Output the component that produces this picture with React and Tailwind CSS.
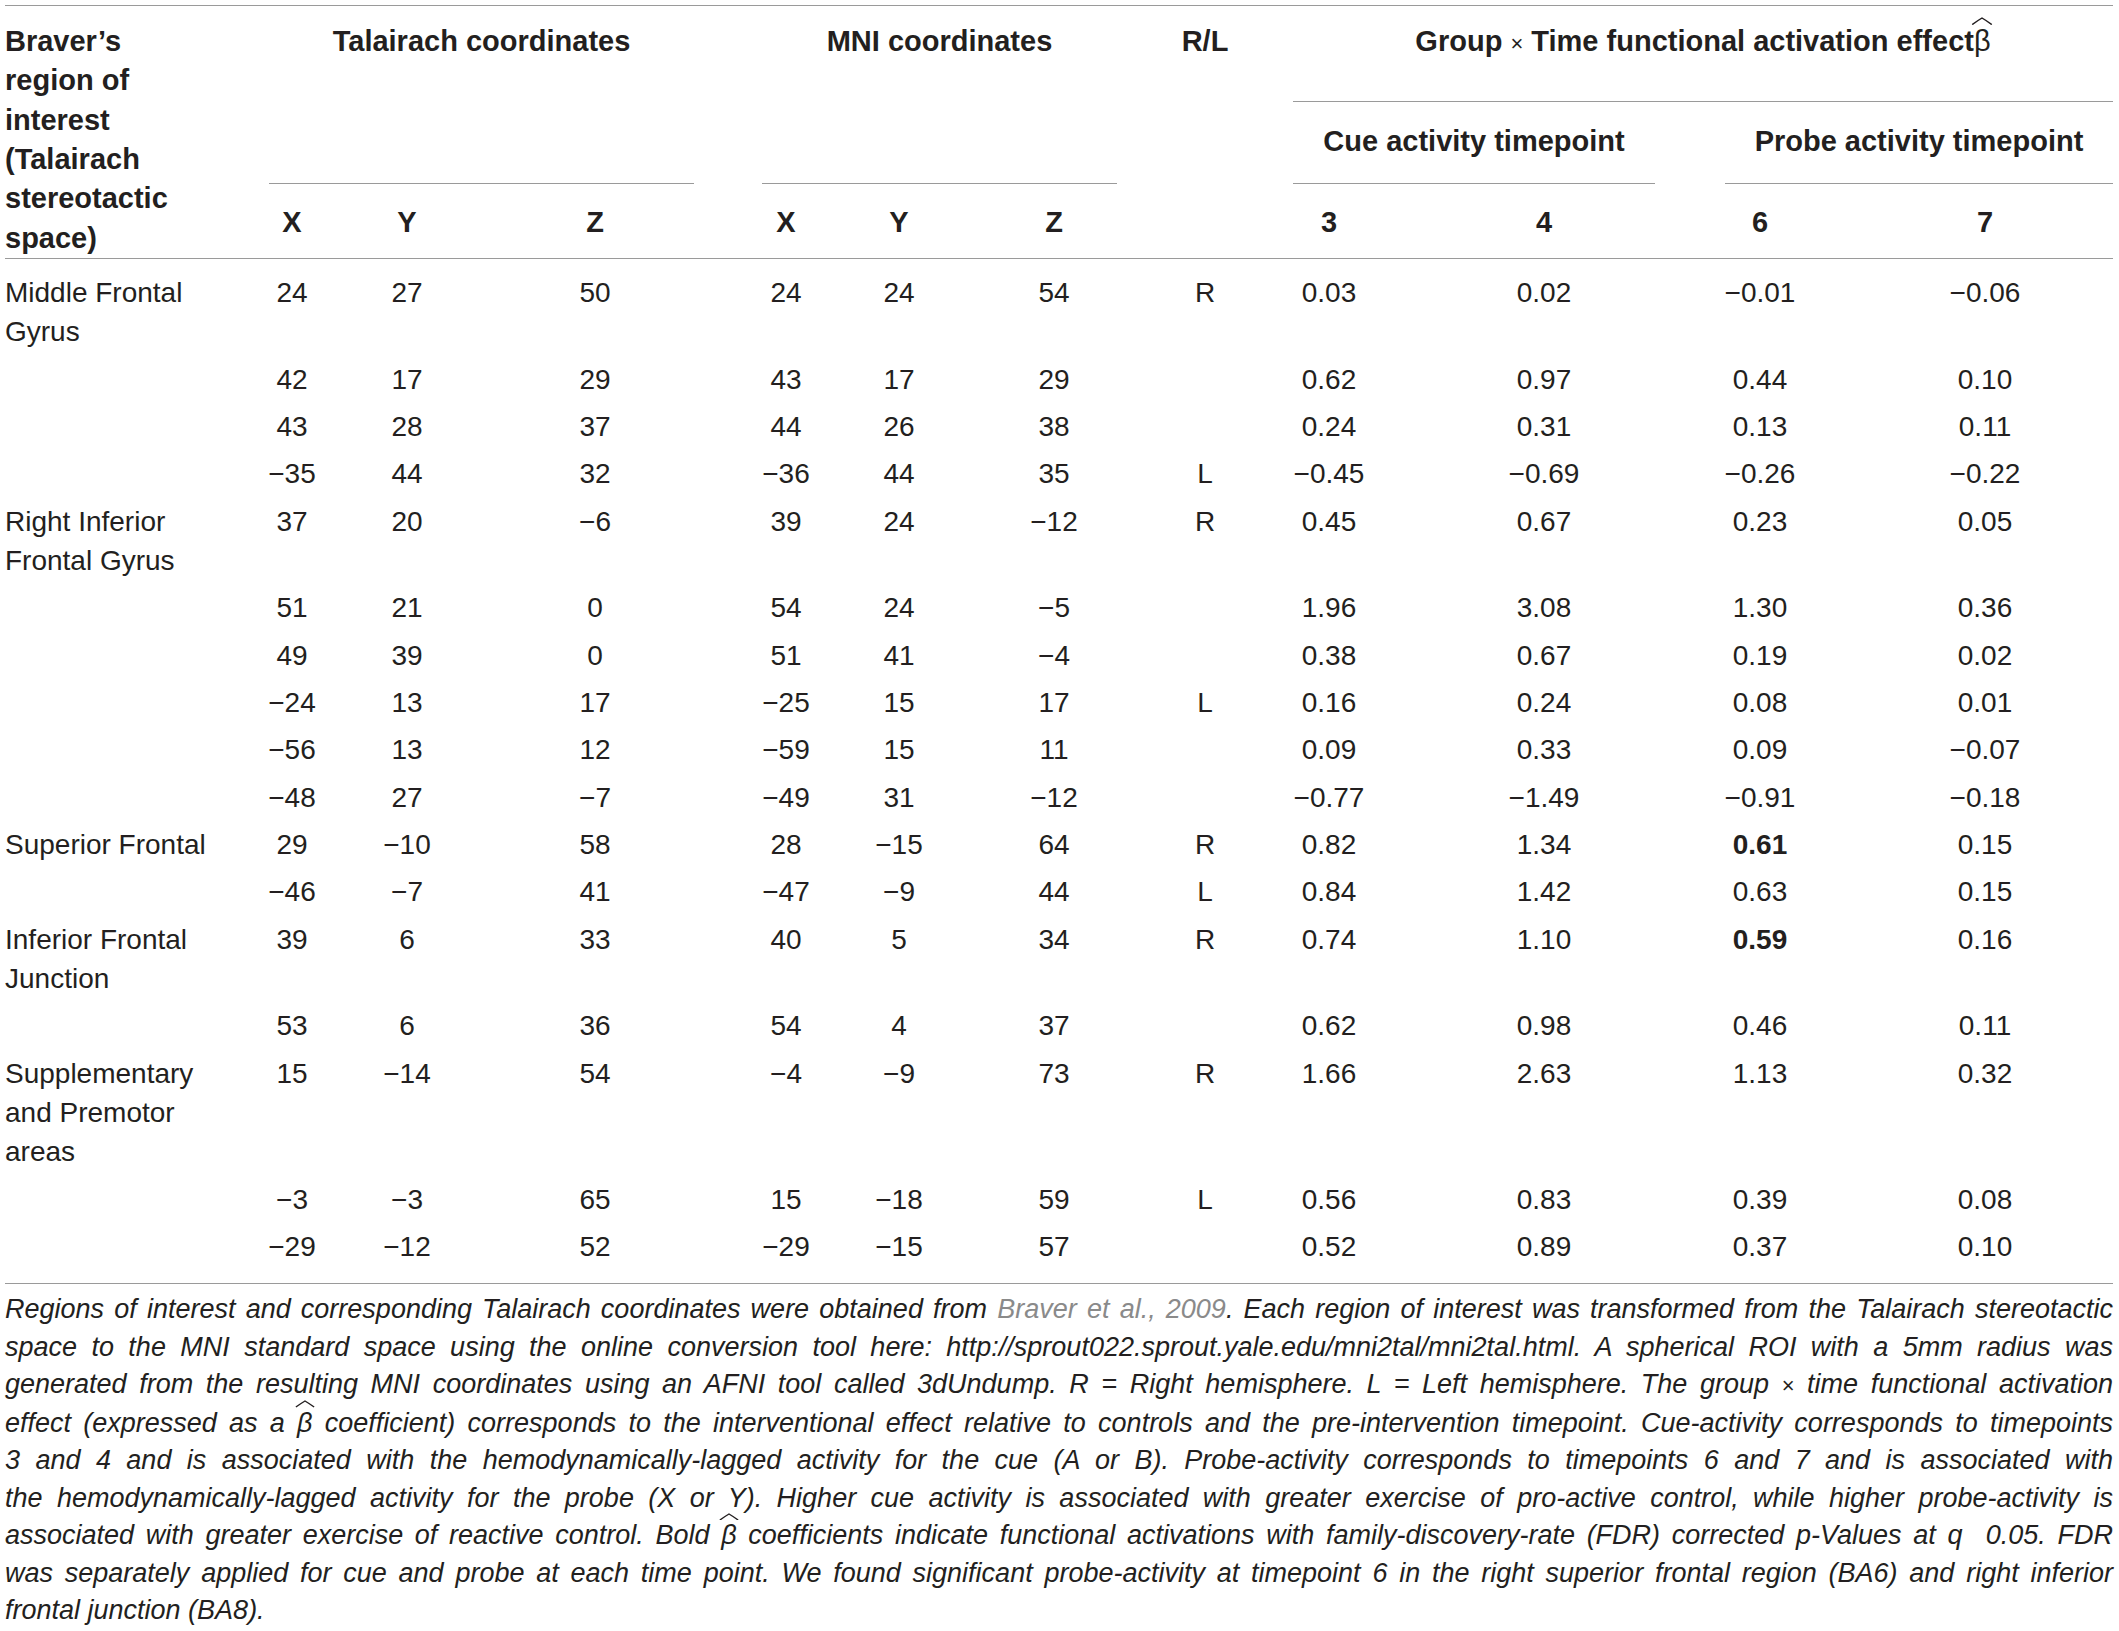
import React from 'react';

const rows = [
  { name: ['Middle Frontal', 'Gyrus'], v: ['24', '27', '50', '24', '24', '54', 'R', '0.03', '0.02', '−0.01', '−0.06'] },
  { v: ['42', '17', '29', '43', '17', '29', '', '0.62', '0.97', '0.44', '0.10'] },
  { v: ['43', '28', '37', '44', '26', '38', '', '0.24', '0.31', '0.13', '0.11'] },
  { v: ['−35', '44', '32', '−36', '44', '35', 'L', '−0.45', '−0.69', '−0.26', '−0.22'] },
  { name: ['Right Inferior', 'Frontal Gyrus'], v: ['37', '20', '−6', '39', '24', '−12', 'R', '0.45', '0.67', '0.23', '0.05'] },
  { v: ['51', '21', '0', '54', '24', '−5', '', '1.96', '3.08', '1.30', '0.36'] },
  { v: ['49', '39', '0', '51', '41', '−4', '', '0.38', '0.67', '0.19', '0.02'] },
  { v: ['−24', '13', '17', '−25', '15', '17', 'L', '0.16', '0.24', '0.08', '0.01'] },
  { v: ['−56', '13', '12', '−59', '15', '11', '', '0.09', '0.33', '0.09', '−0.07'] },
  { v: ['−48', '27', '−7', '−49', '31', '−12', '', '−0.77', '−1.49', '−0.91', '−0.18'] },
  { name: ['Superior Frontal'], v: ['29', '−10', '58', '28', '−15', '64', 'R', '0.82', '1.34', '0.61', '0.15'], bold: 9 },
  { v: ['−46', '−7', '41', '−47', '−9', '44', 'L', '0.84', '1.42', '0.63', '0.15'] },
  { name: ['Inferior Frontal', 'Junction'], v: ['39', '6', '33', '40', '5', '34', 'R', '0.74', '1.10', '0.59', '0.16'], bold: 9 },
  { v: ['53', '6', '36', '54', '4', '37', '', '0.62', '0.98', '0.46', '0.11'] },
  { name: ['Supplementary', 'and Premotor', 'areas'], v: ['15', '−14', '54', '−4', '−9', '73', 'R', '1.66', '2.63', '1.13', '0.32'] },
  { v: ['−3', '−3', '65', '15', '−18', '59', 'L', '0.56', '0.83', '0.39', '0.08'] },
  { v: ['−29', '−12', '52', '−29', '−15', '57', '', '0.52', '0.89', '0.37', '0.10'] },
];

const cols = 'grid grid-cols-[235px_104px_126px_250px_132px_94px_216px_86px_162px_268px_164px_271px]';

// beta with a hat drawn over it
const BetaHat = ({ bold }) => (
  <span className={`relative inline-block ${bold ? 'font-normal' : ''}`}>
    β
    <svg
      className="absolute left-1/2 -translate-x-1/2 top-[-0.16em] w-[0.75em] h-[0.28em]"
      viewBox="0 0 20 8"
      preserveAspectRatio="none"
    >
      <path d="M1 7.5 Q6 3.5 10 1 Q14 3.5 19 7.5" fill="none" stroke="currentColor" strokeWidth="1.4" />
    </svg>
  </span>
);

const footerLines = [
  <>
    Regions of interest and corresponding Talairach coordinates were obtained from{' '}
    <span className="text-[#8a8a8a]">Braver et al., 2009</span>. Each region of interest was transformed from the Talairach stereotactic
  </>,
  <>space to the MNI standard space using the online conversion tool here: http://sprout022.sprout.yale.edu/mni2tal/mni2tal.html. A spherical ROI with a 5mm radius was</>,
  <>
    generated from the resulting MNI coordinates using an AFNI tool called 3dUndump. R = Right hemisphere. L = Left hemisphere. The group{' '}
    <span className="not-italic text-[22px]">×</span> time functional activation
  </>,
  <>
    effect (expressed as a <BetaHat /> coefficient) corresponds to the interventional effect relative to controls and the pre-intervention timepoint. Cue-activity corresponds to timepoints
  </>,
  <>3 and 4 and is associated with the hemodynamically-lagged activity for the cue (A or B). Probe-activity corresponds to timepoints 6 and 7 and is associated with</>,
  <>the hemodynamically-lagged activity for the probe (X or Y). Higher cue activity is associated with greater exercise of pro-active control, while higher probe-activity is</>,
  <>
    associated with greater exercise of reactive control. Bold <BetaHat /> coefficients indicate functional activations with family-discovery-rate (FDR) corrected p-Values at q{'\u00a0 '}0.05. FDR
  </>,
  <>was separately applied for cue and probe at each time point. We found significant probe-activity at timepoint 6 in the right superior frontal region (BA6) and right inferior</>,
];

const App = () => {
  return (
    <div className="min-h-screen bg-white pl-[5px] pt-[5px] font-['Liberation_Sans',Arial,sans-serif] text-[28px] text-[#231f20]">
      <div className="w-[2108px]">
        {/* header */}
        <div className={`${cols} grid-rows-[96px_82px_74px] border-t border-b border-[#9a9a9a] font-bold text-[29px] leading-[39.33px]`}>
          <div className="col-start-1 row-start-1 row-span-3 pt-[16px]">
            Braver’s<br />region of<br />interest<br />(Talairach<br />stereotactic<br />space)
          </div>
          <div className="col-start-2 col-span-3 row-start-1 row-span-2 ml-[29px] mr-[26px] pt-[16px] border-b border-[#9a9a9a] text-center">
            Talairach coordinates
          </div>
          <div className="col-start-5 col-span-3 row-start-1 row-span-2 ml-[42px] mr-[45px] pt-[16px] border-b border-[#9a9a9a] text-center">
            MNI coordinates
          </div>
          <div className="col-start-8 row-start-1 row-span-3 pt-[16px] text-center">R/L</div>
          <div className="col-start-9 col-span-4 row-start-1 ml-[45px] pt-[16px] border-b border-[#9a9a9a] text-center">
            Group <span className="font-normal text-[22px]">×</span> Time functional activation effect<BetaHat bold />
          </div>
          <div className="col-start-9 col-span-2 row-start-2 ml-[45px] mr-[23px] pt-[20px] border-b border-[#9a9a9a] text-center">
            Cue activity timepoint
          </div>
          <div className="col-start-11 col-span-2 row-start-2 ml-[47px] pt-[20px] border-b border-[#9a9a9a] text-center">
            Probe activity timepoint
          </div>
          {['X', 'Y', 'Z', 'X', 'Y', 'Z'].map((h, i) => (
            <div key={'h' + i} className="row-start-3 pt-[19px] text-center" style={{ gridColumnStart: i + 2 }}>
              {h}
            </div>
          ))}
          <div className="col-start-9 row-start-3 pt-[19px] text-center">3</div>
          <div className="col-start-10 row-start-3 pt-[19px] text-center">4</div>
          <div className="col-start-11 row-start-3 pt-[19px] text-center">6</div>
          <div className="col-start-12 row-start-3 pt-[19px] pl-[15px] text-center">7</div>
        </div>

        {/* body */}
        <div className={`${cols} pt-[10px] pb-[13px] border-b border-[#9a9a9a] leading-[39.33px]`}>
          {rows.map((r, ri) => (
            <React.Fragment key={ri}>
              <div className="py-[4px]">
                {r.name && r.name.map((n, ni) => <div key={ni}>{n}</div>)}
              </div>
              {r.v.map((val, ci) => (
                <div
                  key={ci}
                  className={`py-[4px] text-center ${ci === 10 ? 'pl-[15px]' : ''} ${r.bold === ci ? 'font-bold' : ''}`}
                >
                  {val}
                </div>
              ))}
            </React.Fragment>
          ))}
        </div>

        {/* footnote */}
        <div className="pt-[7px] italic text-[27px] leading-[37.5px]">
          {footerLines.map((l, i) => (
            <div key={i} className="text-justify [text-align-last:justify] whitespace-nowrap">
              {l}
            </div>
          ))}
          <div>frontal junction (BA8).</div>
        </div>
      </div>
    </div>
  );
};

export default App;
